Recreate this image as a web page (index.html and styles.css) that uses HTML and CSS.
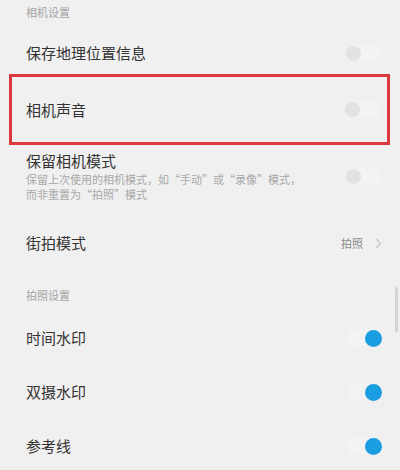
FILE: index.html
```html
<!DOCTYPE html>
<html>

<head>
    <title>相机设置</title>
    <link rel="stylesheet" href="styles.css">
</head>

<body>
    <div class="section-title first">相机设置</div>

    <div class="row">
        <span class="label">保存地理位置信息</span>
        <div class="switch"><div class="knob"></div></div>
    </div>

    <div class="row marked">
        <span class="label">相机声音</span>
        <div class="switch"><div class="knob"></div></div>
    </div>

    <div class="row tall">
        <div class="text">
            <div class="label">保留相机模式</div>
            <div class="desc">保留上次使用的相机模式，如“手动”或“录像”模式，</div>
            <div class="desc">而非重置为“拍照”模式</div>
        </div>
        <div class="switch"><div class="knob"></div></div>
    </div>

    <div class="row">
        <span class="label">街拍模式</span>
        <div class="value">
            <span>拍照</span>
            <svg class="chevron" width="7" height="11" viewBox="0 0 7 11">
                <path d="M1 1 L5.5 5.5 L1 10" fill="none" stroke="#c4c4c4" stroke-width="1.3" />
            </svg>
        </div>
    </div>

    <div class="section-title">拍照设置</div>

    <div class="row">
        <span class="label">时间水印</span>
        <div class="switch on"><div class="knob"></div></div>
    </div>

    <div class="row">
        <span class="label">双摄水印</span>
        <div class="switch on"><div class="knob"></div></div>
    </div>

    <div class="row">
        <span class="label">参考线</span>
        <div class="switch on"><div class="knob"></div></div>
    </div>

    <div class="scrollbar"></div>
</body>

</html>
```

FILE: styles.css
```css
body {
    font-family: "Noto Sans CJK SC", "Noto Sans", sans-serif;
    margin: 0;
    background-color: #f1f0f0;
    color: #333;
    overflow: hidden;
    height: 470px;
    position: relative;
}

.section-title {
    font-size: 11px;
    line-height: 16px;
    color: #a3a3a3;
    padding: 17px 26px 8px;
}

.section-title.first {
    padding: 4px 26px 6px;
}

.row {
    display: flex;
    align-items: center;
    justify-content: space-between;
    height: 54px;
    padding: 0 18px 0 26px;
}

.row.marked {
    height: 65px;
    margin: -6px 10px 0 9px;
    padding: 0 6px 0 14px;
    border: 3px solid #dd3a40;
}

.row.tall {
    height: auto;
    padding-top: 6px;
    padding-bottom: 14px;
}

.label {
    font-size: 15px;
    line-height: 20px;
    color: #333;
}

.desc {
    font-size: 11px;
    line-height: 15px;
    color: #a8a8a8;
}

.label + .desc {
    margin-top: 1px;
}

.value {
    display: flex;
    align-items: center;
    gap: 12px;
    font-size: 11px;
    color: #8a8a8a;
}

.chevron {
    display: block;
}

.switch {
    position: relative;
    width: 36px;
    height: 16px;
    border-radius: 8px;
    background: #f4f3f3;
    flex-shrink: 0;
}

.knob {
    position: absolute;
    left: 0;
    top: 0.5px;
    width: 15px;
    height: 15px;
    border-radius: 50%;
    background: #e2e2e2;
}

.switch.on .knob {
    left: auto;
    right: 0;
    top: -0.5px;
    width: 17px;
    height: 17px;
    background: #1b9de2;
}

.scrollbar {
    position: absolute;
    right: 2px;
    top: 287px;
    width: 3px;
    height: 45px;
    border-radius: 2px;
    background: #d4d4d4;
}
```
